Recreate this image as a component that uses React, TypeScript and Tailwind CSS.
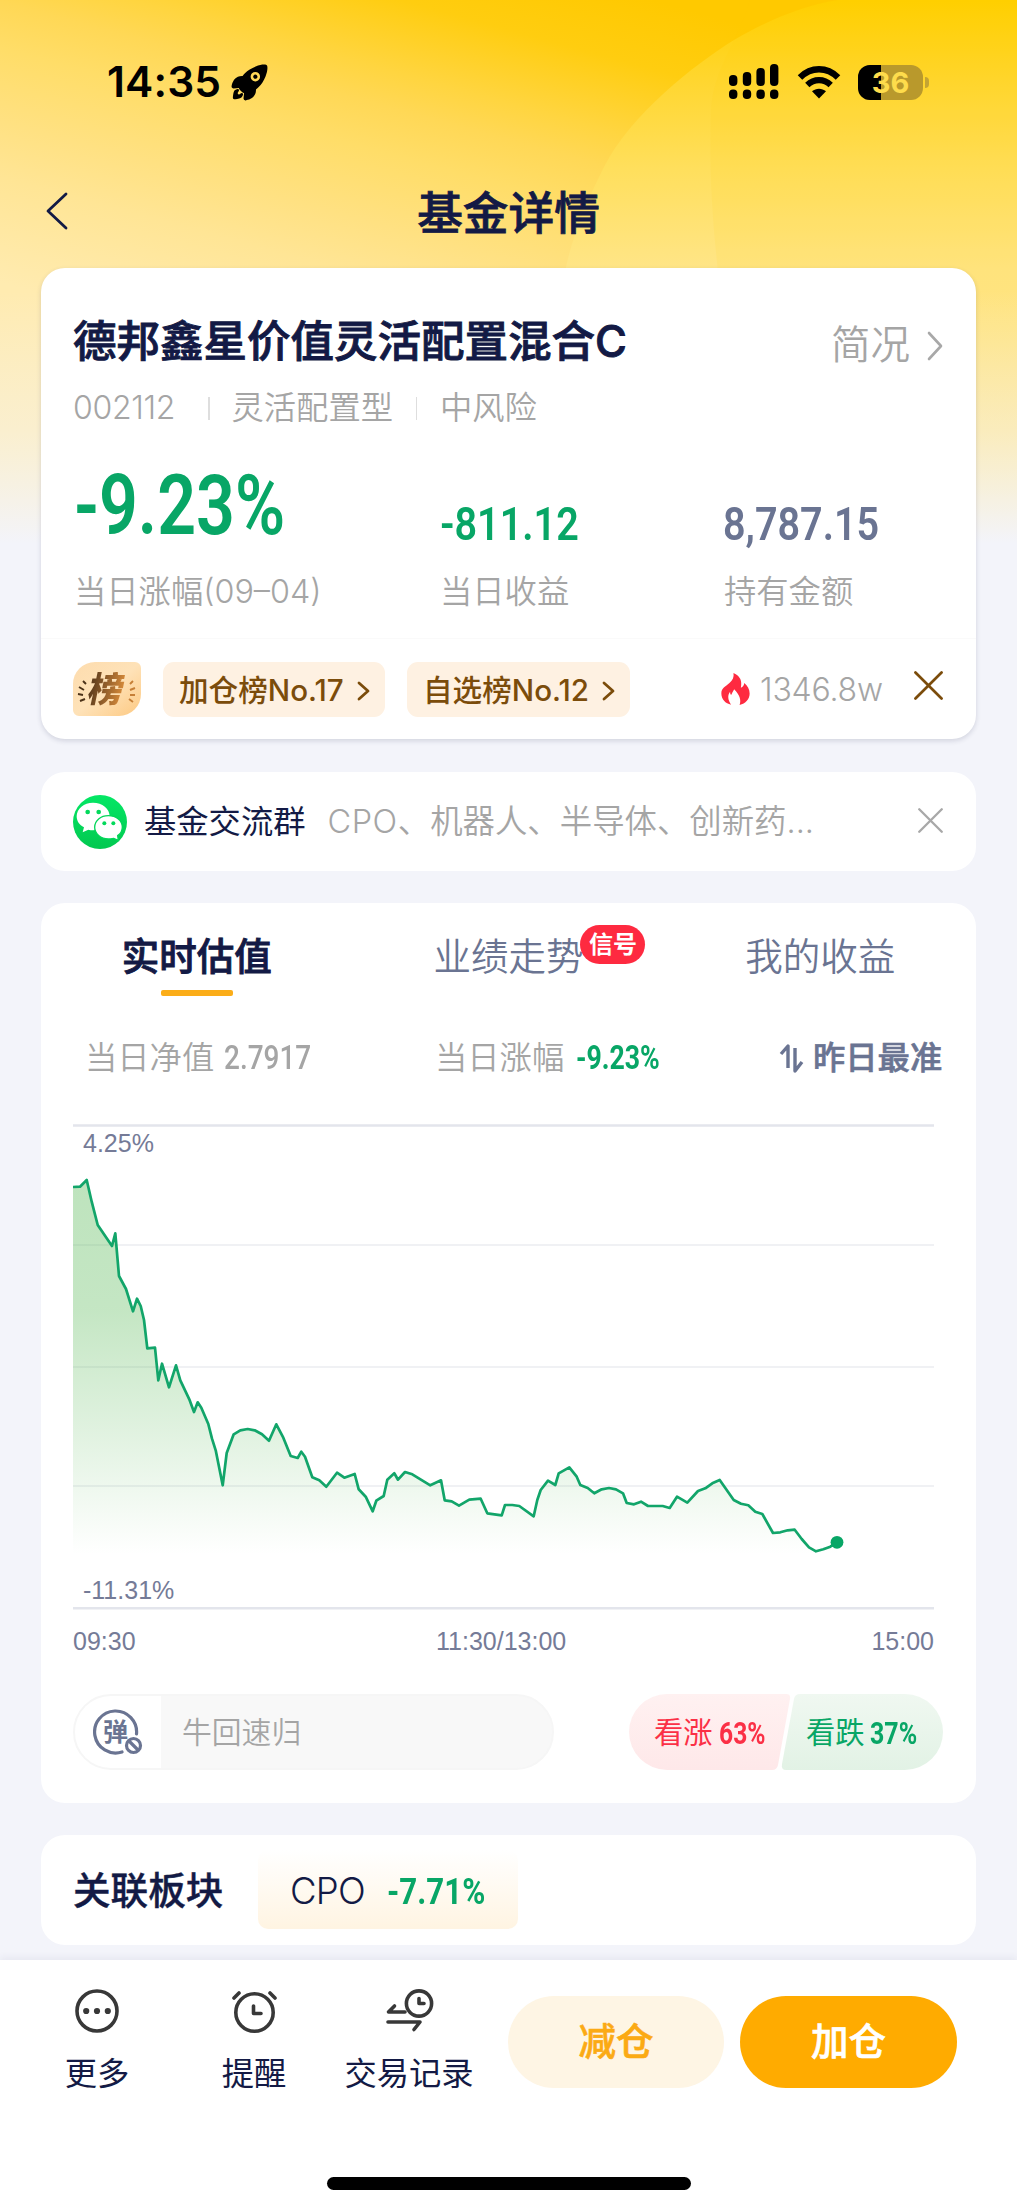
import React from 'react';
import { IoRocket } from 'react-icons/io5';

const POINTS: [number, number][] = [
  [0, 63], [7, 62.7], [13.7, 56], [18.7, 77.7], [24.7, 101], [39, 122], [42.3, 109.3], [46, 152], [53, 165],
  [60, 187.3], [64, 174.7], [67.7, 182], [71, 196], [74.3, 224.3], [82, 223.7], [85.3, 256.3], [89, 239.7],
  [96, 263.3], [103, 241.3], [107.3, 256.3], [116.3, 275.3], [121, 288], [124.7, 278.3], [128.3, 283.7],
  [135.3, 300], [139, 314.7], [142.7, 326.3], [149.7, 361.3], [153.7, 329], [160.7, 310.3], [167.3, 306.3],
  [174.7, 305], [181.7, 306.3], [189, 310.3], [196, 316.7], [203.3, 300.3], [210.3, 313.7], [217.7, 332],
  [224.7, 334], [228.3, 327.7], [232, 332.7], [239.3, 353.3], [246.3, 356.3], [253.3, 362.7], [264, 348.7],
  [271.3, 353.7], [281.7, 350], [285.7, 365.3], [292.7, 372.7], [299.7, 387.3], [303.3, 376.7], [310.7, 372],
  [314.3, 355.7], [321.3, 349.3], [325, 355.7], [332, 348], [339.3, 350.3], [357.3, 361.3], [368, 356.3],
  [371.7, 376.3], [378.7, 377.3], [386, 381.7], [396.3, 375.7], [407.7, 374.7], [414.3, 389.3], [428.7, 391.3],
  [432, 381], [439.3, 381], [446.3, 382], [460.7, 392.3], [464.3, 376], [467.7, 366], [475, 356.7],
  [482.3, 361], [485.7, 349.3], [496.3, 343.3], [503.7, 352.7], [507.3, 361], [514.7, 364], [521.3, 369.3],
  [528.7, 365.3], [536, 364], [543, 365.3], [550, 369.3], [553.7, 379], [561, 380.3], [568, 377.7], [575, 382],
  [589.7, 382], [596.7, 384], [604, 372.7], [614.3, 378.7], [625, 367], [632.3, 364.3], [639.3, 359.3],
  [646.7, 356], [660.7, 376], [668, 379.7], [675.3, 381.3], [682.3, 387.7], [689.3, 390], [700, 409],
  [707.3, 408.3], [714.7, 406.3], [721.7, 405.7], [728.7, 415], [736, 423.3], [743, 427.3], [750.3, 425.3],
  [757.3, 422.7], [764, 418.3],
];

const LINE = POINTS.map(([x, y]) => `${x},${y}`).join(' ');

const TABS = [
  { label: '实时估值', active: true },
  { label: '业绩走势', badge: '信号' },
  { label: '我的收益' },
];

const RANKS = [
  { label: '加仓榜No.17', width: 'w-[222px]' },
  { label: '自选榜No.12', width: 'w-[223px]' },
];

// Condensed digits: Roboto squeezed horizontally
const Num: React.FC<{ className?: string; squeeze: string; children: React.ReactNode }> = ({ className = '', squeeze, children }) => (
  <span className={`block shrink-0 whitespace-nowrap font-['Roboto',sans-serif] leading-none ${className}`}>
    <span className={`inline-block origin-left ${squeeze}`}>{children}</span>
  </span>
);

const HeaderGlow = () => (
  <svg className="absolute inset-x-0 top-0 -z-10" width="1017" height="560" viewBox="0 0 1017 560">
    <defs>
      <linearGradient id="sky" gradientUnits="userSpaceOnUse" x1="690" y1="10" x2="573" y2="439">
        <stop offset="0" stopColor="#ffc900" />
        <stop offset="0.15" stopColor="#ffcd10" />
        <stop offset="0.31" stopColor="#ffd540" />
        <stop offset="0.39" stopColor="#ffd856" />
        <stop offset="0.49" stopColor="#ffdd68" />
        <stop offset="0.65" stopColor="#ffe182" />
        <stop offset="0.77" stopColor="#ffe595" />
        <stop offset="1" stopColor="#ffebb0" />
      </linearGradient>
      <linearGradient id="arc" x1="0" y1="0" x2="0" y2="1">
        <stop offset="0" stopColor="#ffd000" />
        <stop offset="0.14" stopColor="#ffd62e" />
        <stop offset="0.3" stopColor="#ffdf5c" />
        <stop offset="0.48" stopColor="#ffe587" />
        <stop offset="1" stopColor="#ffeaa4" />
      </linearGradient>
      <linearGradient id="fade" x1="0" y1="0" x2="0" y2="1">
        <stop offset="0.52" stopColor="#f3f4fa" stopOpacity="0" />
        <stop offset="0.77" stopColor="#f5f3ee" stopOpacity="0.5" />
        <stop offset="0.97" stopColor="#f3f4fa" />
      </linearGradient>
    </defs>
    <rect width="1017" height="560" fill="url(#sky)" />
    <path d="M838 0C800 6 765 22 734 40C695 64 630 115 604 167C584 207 568 245 562 290V560H1017V0Z" fill="url(#arc)" />
    <path d="M750 0C745 18 740 26 734 40C722 65 712 85 711 110C709 170 712 220 720 290V560H1017V0Z" fill="#ffd200" fillOpacity="0.08" />
    <rect width="1017" height="560" fill="url(#fade)" />
  </svg>
);

const StatusBar = () => (
  <div className="flex h-[164px] items-center pl-[107px] pr-[88px] text-black">
    <span className="w-[122px] pt-px text-[42.5px] font-semibold leading-none tracking-[0.1px]">14:35</span>
    <IoRocket size={41} />
    <div className="ml-auto flex items-center">
      <svg width="50" height="36" viewBox="0 0 50 36" fill="#000">
        <rect x="0" y="11" width="8.4" height="11" rx="4" />
        <rect x="13.8" y="8" width="8.4" height="14" rx="4" />
        <rect x="27.4" y="4" width="8.4" height="18" rx="4" />
        <rect x="41" y="0" width="8.4" height="22" rx="4" />
        <rect x="0" y="25.5" width="8.4" height="9.5" rx="4" />
        <rect x="13.8" y="25.5" width="8.4" height="9.5" rx="4" />
        <rect x="27.4" y="25.5" width="8.4" height="9.5" rx="4" />
        <rect x="41" y="25.5" width="8.4" height="9.5" rx="4" />
      </svg>
      <svg className="ml-[18px]" width="44" height="33" viewBox="0 0 44 33">
        <path d="M3 11.5C14 0.5 30 0.5 41 11.5" fill="none" stroke="#000" strokeWidth="6.4" />
        <path d="M10.3 19C17 12.6 27 12.6 33.7 19" fill="none" stroke="#000" strokeWidth="6.2" />
        <path d="M22 32.5L15 25.3C19 21.8 25 21.8 29 25.3Z" fill="#000" />
      </svg>
      <div className="relative ml-[17px] flex h-[35px] w-[65px] items-center justify-center overflow-hidden rounded-[12px] bg-[#b9992c]">
        <div className="absolute inset-y-0 left-0 w-[23px] bg-black" />
        <span className="relative text-[29px] font-bold leading-none text-[#fedc4c]">36</span>
      </div>
      <div className="ml-[2px] h-[11px] w-[4px] rounded-r-full bg-[#c4a433]" />
    </div>
  </div>
);

const NavBar = () => (
  <div className="relative flex h-[104px] items-center justify-center pb-[4px]">
    <svg className="absolute left-[45px] top-[28px]" width="24" height="38" viewBox="0 0 24 38" fill="none" stroke="#131a45" strokeWidth="2.8" strokeLinecap="round" strokeLinejoin="round">
      <path d="M21 2L3 19L21 36" />
    </svg>
    <h1 className="text-[45.7px] font-medium leading-none text-[#131a45] [-webkit-text-stroke:0.8px_#131a45]">基金详情</h1>
  </div>
);

const RankBadge = () => (
  <div className="relative flex h-[54px] w-[68px] items-center justify-center overflow-hidden rounded-[6px] rounded-br-[22px] rounded-tl-[22px] bg-linear-to-br from-[#fddcae] via-[#fee2b8] to-[#fdc981]">
    <span className="-skew-x-12 bg-linear-to-r from-[#5a3a1c] to-[#d98c3a] bg-clip-text text-[35px] font-black leading-none text-transparent">榜</span>
    <svg className="absolute inset-0" width="68" height="54" viewBox="0 0 68 54" fill="none" strokeWidth="1.9">
      <path d="M10 19L13 22M6 25L11 28M5 32L10 33M7 39L12 37" stroke="#4b3218" />
      <path d="M60 19L57 22M62 26L57 28M62 33L57 33M60 40L56 37" stroke="#c67f37" />
    </svg>
  </div>
);

const Cross: React.FC<{ size: number; color: string; weight: number }> = ({ size, color, weight }) => (
  <svg width={size} height={size} viewBox="0 0 30 30" fill="none" stroke={color} strokeWidth={weight} strokeLinecap="round">
    <path d="M1.5 1.5L28.5 28.5M28.5 1.5L1.5 28.5" />
  </svg>
);

const FundCard = () => (
  <section className="h-[471px] rounded-[24px] bg-white shadow-[0_2px_5px_rgba(40,45,80,0.16)]">
    <div className="h-[371px] border-b border-[#fafafa] pl-[32px] pr-[32px] pt-[47px]">
      <div className="flex h-[54px] items-center justify-between">
        <h2 className="text-[43.5px] font-medium leading-none text-[#131a45] [-webkit-text-stroke:0.9px_#131a45]">德邦鑫星价值灵活配置混合C</h2>
        <div className="flex items-center pt-[7px] text-[39.5px] font-[350] leading-none text-[#a5a5a5]">
          简况
          <svg className="ml-[17px] mr-px" width="16" height="30" viewBox="0 0 16 30" fill="none" stroke="#a8a8a8" strokeWidth="2.6" strokeLinecap="round" strokeLinejoin="round">
            <path d="M2 2L14 15L2 28" />
          </svg>
        </div>
      </div>
      <div className="mt-[19px] flex h-[40px] items-center text-[32.3px] font-[350] leading-none text-[#a5a5a5]">
        <span className="w-[135px] text-[32px] tracking-[-0.3px]">002112</span>
        <i className="h-[23px] w-[1.5px] bg-[#dedede]" />
        <span className="w-[182px] pl-[22px] whitespace-nowrap">灵活配置型</span>
        <i className="ml-[24px] h-[23px] w-[1.5px] bg-[#dedede]" />
        <span className="ml-[23px]">中风险</span>
      </div>
      <div className="mt-[35px] grid h-[84px] grid-cols-[366px_283px_1fr] items-end font-semibold">
        <Num className="pl-px text-[83px] text-[#08a666]" squeeze="scale-x-[0.82]">-9.23%</Num>
        <Num className="pl-px text-[46px] text-[#08a666]" squeeze="scale-x-[0.86]">-811.12</Num>
        <Num className="pl-px text-[46px] text-[#6a7492]" squeeze="scale-x-[0.86]">8,787.15</Num>
      </div>
      <div className="mt-[29px] grid grid-cols-[366px_283px_1fr] whitespace-nowrap pl-px text-[32.3px] font-[350] leading-none text-[#a5a5a5]">
        <span>当日涨幅<span className="text-[32.3px]">(09–04)</span></span>
        <span>当日收益</span>
        <span className="pl-px">持有金额</span>
      </div>
    </div>
    <div className="flex h-[100px] items-center pl-[32px] pr-[33px]">
      <RankBadge />
      {RANKS.map((rank) => (
        <div key={rank.label} className={`ml-[22px] flex h-[55px] items-center rounded-[11px] bg-[#fef1e2] pl-[16px] pt-[3px] ${rank.width}`}>
          <span className="whitespace-nowrap text-[29.6px] font-medium leading-none text-[#7b4c0b]">{rank.label}</span>
          <svg className="ml-auto mr-[15px]" width="13" height="20" viewBox="0 0 13 20" fill="none" stroke="#7b4c0b" strokeWidth="2.8" strokeLinecap="round" strokeLinejoin="round">
            <path d="M2 2L11 10L2 18" />
          </svg>
        </div>
      ))}
      <svg className="ml-auto" width="29" height="32" viewBox="0 0 84 95" fill="#fe2a40">
        <path d="M36 0C52 6 60 20 59 32C59 39 58 43 58 44C64 42 67 37 68 30C78 39 84 49 84 61C84 78 72 91 54 95C59 82 56 66 38 48C34 55 32 60 29 65C26 63 26 60 26 56C17 67 20 82 29 94C12 91 0 78 0 61C0 45 12 41 24 30C34 21 38 12 36 0Z" />
      </svg>
      <span className="ml-[10px] w-[123px] whitespace-nowrap pt-[2px] text-[32px] font-[350] leading-none tracking-[-0.2px] text-[#a5a5a5]">1346.8w</span>
      <div className="ml-[31px] pb-[8px]"><Cross size={29} color="#7b4c0b" weight={2.8} /></div>
    </div>
  </section>
);

const WechatIcon = () => (
  <svg width="54" height="54" viewBox="0 0 162 162">
    <defs>
      <linearGradient id="wx" x1="0" y1="0" x2="0" y2="1">
        <stop offset="0" stopColor="#04e765" />
        <stop offset="1" stopColor="#02c850" />
      </linearGradient>
    </defs>
    <circle cx="81" cy="81" r="81" fill="url(#wx)" />
    <path d="M60 23C88 23 110 41 110 64C110 87 88 106 60 106C55 106 50 105 46 104L29 112L33 97C19 90 11 78 11 64C11 41 33 23 60 23Z" fill="#fff" />
    <path d="M106 62C130 62 148 77 148 96C148 107 143 116 134 122L136 136L122 130C117 131 112 132 106 132C83 132 65 116 65 97C65 77 83 62 106 62Z" fill="#fff" stroke="#03d659" strokeWidth="4" />
    <g fill="#03d95b">
      <circle cx="44" cy="51" r="7" />
      <circle cx="77" cy="51" r="7" />
      <circle cx="94" cy="85" r="6" />
      <circle cx="121" cy="85" r="6" />
    </g>
  </svg>
);

const GroupCard = () => (
  <section className="mt-[33px] flex h-[99px] items-center rounded-[24px] bg-white pl-[32px] pr-[33px]">
    <WechatIcon />
    <span className="ml-[17px] pt-[2px] text-[32.3px] font-normal leading-none text-[#131a45]">基金交流群</span>
    <span className="ml-[22px] whitespace-nowrap pt-[2px] text-[32.4px] font-[350] leading-none text-[#a5a5a5]"><span className="tracking-[0.6px]">CPO</span>、机器人、半导体、创新药...</span>
    <div className="ml-auto pb-[2px]"><Cross size={25} color="#a8a8a8" weight={2.8} /></div>
  </section>
);

const Chart = () => (
  <div className="w-[861px] font-['Liberation_Sans',sans-serif] text-[25px] leading-none text-[#757b97]">
    <div className="relative">
      <svg className="block" width="861" height="486" viewBox="0 0 861 486">
        <defs>
          <linearGradient id="area" gradientUnits="userSpaceOnUse" x1="0" y1="56" x2="0" y2="430">
            <stop offset="0" stopColor="#5cba5a" stopOpacity="0.4" />
            <stop offset="0.35" stopColor="#5cba5a" stopOpacity="0.36" />
            <stop offset="0.65" stopColor="#5cba5a" stopOpacity="0.2" />
            <stop offset="1" stopColor="#5cba5a" stopOpacity="0" />
          </linearGradient>
        </defs>
        <path d="M0 121H861M0 243H861M0 362H861" stroke="#f0f1f4" strokeWidth="2.2" />
        <path d="M0 1.5H861M0 484.3H861" stroke="#e3e5ec" strokeWidth="2.4" />
        <polygon points={`0,430 ${LINE} 764,430`} fill="url(#area)" />
        <polyline points={LINE} fill="none" stroke="#12a56a" strokeWidth="2.7" strokeLinejoin="round" />
        <circle cx="764" cy="418.3" r="6.4" fill="#08a666" />
      </svg>
      <span className="absolute left-[10px] top-[7px]">4.25%</span>
      <span className="absolute bottom-[7px] left-[10px]">-11.31%</span>
    </div>
    <div className="relative mt-[19px] flex h-[25px] items-center justify-between">
      <span>09:30</span>
      <span className="absolute left-[363px]">11:30/13:00</span>
      <span>15:00</span>
    </div>
  </div>
);

const DanmuIcon = () => (
  <div className="relative flex size-[46px] items-center justify-center text-[25px] font-bold leading-none text-[#6a7492]">
    <svg className="absolute inset-0" width="50" height="46" viewBox="0 0 50 46" fill="none" stroke="#6a7492" strokeWidth="3.2">
      <path d="M43.5 25A21 21 0 1 0 29 43" strokeLinecap="round" />
      <circle cx="40.5" cy="36.5" r="7" />
      <path d="M36 32L45 41" />
    </svg>
    <span className="pr-[1px]">弹</span>
  </div>
);

const VoteBar = () => (
  <div className="relative h-[76px] w-[314px]">
    <svg className="absolute inset-0" width="314" height="76" viewBox="0 0 314 76">
      <defs>
        <linearGradient id="up" x1="0" y1="0" x2="0" y2="1">
          <stop offset="0" stopColor="#fff1f1" />
          <stop offset="1" stopColor="#fee8e9" />
        </linearGradient>
        <linearGradient id="down" x1="0" y1="0" x2="0" y2="1">
          <stop offset="0" stopColor="#f0f8f1" />
          <stop offset="1" stopColor="#e2f2e5" />
        </linearGradient>
      </defs>
      <path d="M38 0H157Q162 0 161 5L149 71Q148 76 143 76H38A38 38 0 0 1 38 0Z" fill="url(#up)" />
      <path d="M171 0H276A38 38 0 0 1 276 76H157Q152 76 153 70L165 5Q166 0 171 0Z" fill="url(#down)" />
    </svg>
    <div className="relative flex h-full items-center pt-[2px] text-[29.3px] font-normal leading-none">
      <span className="ml-[25px] w-[65px] text-[#fb3046]">看涨</span>
      <Num className="w-[87px] text-[32px] font-bold text-[#fb3046]" squeeze="scale-x-[0.77]">63%</Num>
      <span className="w-[64px] text-[#08a666]">看跌</span>
      <Num className="text-[32px] font-bold text-[#08a666]" squeeze="scale-x-[0.78]">37%</Num>
    </div>
  </div>
);

const ValuationCard = () => (
  <section className="mt-[32px] h-[900px] rounded-[24px] bg-white">
    <div className="grid h-[106px] grid-cols-3">
      {TABS.map((tab) => (
        <div key={tab.label} className="relative flex items-center justify-center pt-[2px]">
          <span className={`relative text-[37.5px] leading-none ${tab.active ? 'font-medium text-[#131a45] [-webkit-text-stroke:0.9px_#131a45]' : 'font-[350] text-[#6a7492]'}`}>
            {tab.label}
            {tab.badge && (
              <span className="absolute -top-[13px] left-full -ml-[3px] flex h-[39px] w-[65px] items-center justify-center whitespace-nowrap rounded-full bg-[#fe2a40] pt-px text-[24px] font-bold text-white">
                {tab.badge}
              </span>
            )}
          </span>
          {tab.active && <span className="absolute bottom-[13px] h-[6px] w-[72px] rounded-[2px] bg-[#fbad18]" />}
        </div>
      ))}
    </div>
    <div className="mt-[29px] flex h-[40px] items-center pl-[44px] text-[32.3px] font-[350] leading-none text-[#a5a5a5]">
      <span className="w-[139px]">当日净值</span>
      <Num className="w-[211px] text-[32.5px] font-medium" squeeze="scale-x-[0.86]">2.7917</Num>
      <span className="w-[141px]">当日涨幅</span>
      <Num className="w-[203px] text-[32.5px] font-bold text-[#08a666]" squeeze="scale-x-[0.82]">-9.23%</Num>
      <svg width="25" height="31" viewBox="0 0 25 31" fill="none" stroke="#6a7492" strokeWidth="3.4" strokeLinejoin="round">
        <path d="M2 11L9 3V25" />
        <path d="M16 5V28L23 19" />
      </svg>
      <span className="ml-[9px] whitespace-nowrap font-medium text-[#6a7492] [-webkit-text-stroke:0.6px_#6a7492]">昨日最准</span>
    </div>
    <div className="mt-[46px] pl-[32px]">
      <Chart />
    </div>
    <div className="mt-[40px] flex h-[76px] justify-between pl-[32px] pr-[33px]">
      <div className="flex w-[481px] items-center overflow-hidden rounded-full border-2 border-[#f6f6f6] bg-[#f8f8f8]">
        <div className="flex h-full w-[86px] items-center bg-white pl-[18px]">
          <DanmuIcon />
        </div>
        <span className="pl-[21px] pt-px text-[29.8px] font-[350] leading-none text-[#a5a5a5]">牛回速归</span>
      </div>
      <VoteBar />
    </div>
  </section>
);

const SectorCard = () => (
  <section className="mt-[32px] flex h-[110px] items-center rounded-[24px] bg-white pl-[32px]">
    <span className="w-[185px] pt-px text-[37.6px] font-medium leading-none text-[#131a45] [-webkit-text-stroke:0.4px_#131a45]">关联板块</span>
    <div className="mt-[-1px] flex h-[79px] w-[260px] items-center rounded-[10px] bg-linear-to-b from-white to-[#fff4e2] pl-[32px] pt-[3px]">
      <span className="w-[97px] text-[36.5px] font-[350] leading-none tracking-[-0.7px] text-[#131a45]">CPO</span>
      <Num className="text-[37px] font-bold text-[#08a666]" squeeze="scale-x-[0.845]">-7.71%</Num>
    </div>
  </section>
);

const iconProps = { width: 50, height: 46, fill: 'none', stroke: '#383838', strokeWidth: 3.6, strokeLinecap: 'round', strokeLinejoin: 'round' } as const;

const ACTIONS = [
  {
    label: '更多',
    box: 'w-[64px] ml-[65px]',
    icon: (
      <svg {...iconProps} viewBox="0 0 50 46">
        <circle cx="25" cy="23" r="20" />
        <g fill="#383838" stroke="none">
          <circle cx="14.2" cy="23" r="3.1" />
          <circle cx="25" cy="23" r="3.1" />
          <circle cx="35.8" cy="23" r="3.1" />
        </g>
      </svg>
    ),
  },
  {
    label: '提醒',
    box: 'w-[64px] ml-[93px]',
    icon: (
      <svg {...iconProps} viewBox="0 0 50 46">
        <circle cx="25.5" cy="24.5" r="18.7" />
        <path d="M24.5 18V25.5H32M5 10L10 5M46 10L41 5" />
      </svg>
    ),
  },
  {
    label: '交易记录',
    box: 'w-[130px] ml-[58px]',
    icon: (
      <svg {...iconProps} viewBox="0 0 50 46">
        <circle cx="35" cy="15.5" r="12.6" />
        <path d="M35 10.5V15.5H40M21 24H4.5L10.5 18M4 34H36L30 41.5" />
      </svg>
    ),
  },
];

const BottomBar = () => (
  <footer className="mt-auto h-[250px] bg-white shadow-[0_-3px_7px_rgba(50,50,100,0.06)]">
    <div className="flex h-[160px] items-start">
      {ACTIONS.map((action) => (
        <div key={action.label} className={`flex flex-col items-center pt-[28px] ${action.box}`}>
          {action.icon}
          <span className="mt-[24px] whitespace-nowrap text-[32.3px] font-normal leading-none text-[#131a45]">{action.label}</span>
        </div>
      ))}
      <button className="ml-[34px] mt-[36px] h-[92px] w-[216px] rounded-full bg-[#fef5e4] text-[37.5px] font-medium leading-none text-[#fbaa14] [-webkit-text-stroke:0.6px_#fbaa14]">减仓</button>
      <button className="ml-[16px] mt-[36px] h-[92px] w-[217px] rounded-full bg-[#ffab00] text-[37.5px] font-medium leading-none text-white [-webkit-text-stroke:0.6px_#fff]">加仓</button>
    </div>
    <div className="mx-auto mt-[57px] h-[13px] w-[364px] rounded-full bg-black" />
  </footer>
);

const App: React.FC = () => (
  <div className="relative isolate flex h-[2210px] w-[1017px] flex-col overflow-hidden bg-[#f3f4fa] font-['Inter','Noto_Sans_CJK_SC',sans-serif]">
    <HeaderGlow />
    <StatusBar />
    <NavBar />
    <main className="px-[41px]">
      <FundCard />
      <GroupCard />
      <ValuationCard />
      <SectorCard />
    </main>
    <BottomBar />
  </div>
);

export default App;
